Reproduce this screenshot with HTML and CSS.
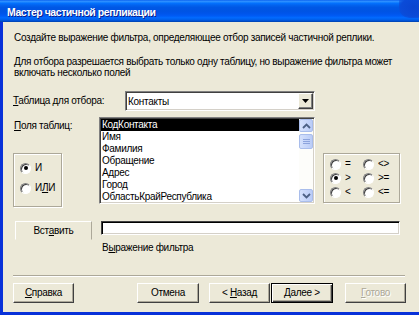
FILE: index.html
```html
<!DOCTYPE html>
<html lang="ru">
<head>
<meta charset="utf-8">
<title>Мастер частичной репликации</title>
<link rel="stylesheet" href="styles.css">
</head>
<body>
<div class="window">
  <div class="titlebar">
    <span class="title">Мастер частичной репликации</span>
    <span class="blob"></span>
  </div>
  <div class="body">
    <p class="intro">Создайте выражение фильтра, определяющее отбор записей частичной реплики.</p>
    <p class="note">Для отбора разрешается выбрать только одну таблицу, но выражение фильтра может включать несколько полей</p>

    <div class="table-row">
      <span class="lbl lbl-table"><u>Т</u>аблица для отбора:</span>
      <div class="combo">
        <span class="combo-text">Контакты</span>
        <span class="drop"><svg width="7" height="4" viewBox="0 0 7 4"><path d="M0 0H7L3.5 4Z" fill="#000"/></svg></span>
      </div>
    </div>

    <div class="fields-row">
      <div class="left-col">
        <span class="lbl lbl-fields"><u>П</u>оля таблиц:</span>
        <div class="group group-logic">
          <div class="radio-item"><span class="radio checked"></span><span>И</span></div>
          <div class="radio-item"><span class="radio"></span><span>И<u>Л</u>И</span></div>
        </div>
      </div>
      <div class="listbox">
        <ul class="items">
          <li class="item selected">КодКонтакта</li>
          <li class="item">Имя</li>
          <li class="item">Фамилия</li>
          <li class="item">Обращение</li>
          <li class="item">Адрес</li>
          <li class="item">Город</li>
          <li class="item">ОбластьКрайРеспублика</li>
        </ul>
        <div class="vscroll">
          <span class="sbtn"><svg width="9" height="6" viewBox="0 0 9 6"><path d="M1 5L4.5 1.5L8 5" fill="none" stroke="#4D6185" stroke-width="1.8"/></svg></span>
          <span class="thumb"><span class="grip"></span><span class="grip"></span><span class="grip"></span></span>
          <span class="track"></span>
          <span class="sbtn"><svg width="9" height="6" viewBox="0 0 9 6"><path d="M1 1L4.5 4.5L8 1" fill="none" stroke="#4D6185" stroke-width="1.8"/></svg></span>
        </div>
      </div>
      <div class="right-col">
        <div class="group group-ops">
          <div class="radio-item"><span class="radio"></span><span>=</span></div>
          <div class="radio-item"><span class="radio"></span><span>&lt;&gt;</span></div>
          <div class="radio-item"><span class="radio checked"></span><span>&gt;</span></div>
          <div class="radio-item"><span class="radio"></span><span>&gt;=</span></div>
          <div class="radio-item"><span class="radio"></span><span>&lt;</span></div>
          <div class="radio-item"><span class="radio"></span><span>&lt;=</span></div>
        </div>
      </div>
    </div>

    <div class="expr-row">
      <button class="btn insert">Вст<u>а</u>вить</button>
      <div class="expr-col">
        <div class="textbox"></div>
        <span class="expr-label">В<u>ы</u>ражение фильтра</span>
      </div>
    </div>

    <div class="sep"></div>

    <div class="buttons">
      <button class="btn b-help"><u>С</u>правка</button>
      <button class="btn b-cancel">Отмена</button>
      <button class="btn b-back">&lt; <u>Н</u>азад</button>
      <button class="btn b-next default"><u>Д</u>алее &gt;</button>
      <button class="btn b-done disabled"><u>Г</u>отово</button>
    </div>
  </div>
</div>
</body>
</html>
```
FILE: styles.css
```css
* { box-sizing: border-box; }
html, body { margin: 0; padding: 0; }
body {
  width: 419px;
  height: 315px;
  overflow: hidden;
  font-family: "Liberation Sans", Arial, sans-serif;
  font-size: 10px;
  letter-spacing: -0.3px;
  color: #000;
  background: #ECE9D8;
}
.window {
  width: 419px;
  height: 315px;
  display: flex;
  flex-direction: column;
  background: #0831D9;
}
.titlebar {
  height: 22px;
  flex: none;
  position: relative;
  display: flex;
  align-items: center;
  padding-left: 7px;
  background: linear-gradient(to bottom, #0058EE 0%, #3593FF 5%, #1A84FF 10%, #036FFC 16%, #0262EE 24%, #0057E5 34%, #0054E3 50%, #0055EB 62%, #005BF5 72%, #026AFE 80%, #0062EF 88%, #0052D6 94%, #0040AB 100%);
}
.title {
  color: #fff;
  font-weight: bold;
  font-size: 10.5px;
  letter-spacing: -0.45px;
  text-shadow: 1px 1px 0 #0A1E8C;
  padding-top: 1px;
}
.blob {
  position: absolute;
  right: -4px;
  top: 0;
  width: 24px;
  height: 18px;
  border-radius: 0 0 0 10px;
  background: radial-gradient(ellipse at 60% 40%, #0A45D0 0%, #0B4BD8 60%, rgba(11,75,216,0) 100%);
}
.body {
  flex: 1;
  margin-left: 3px;
  margin-bottom: 3px;
  background: #ECE9D8;
  padding-left: 10px;
  display: flex;
  flex-direction: column;
}
p { margin: 0; }
.intro {
  margin-top: 10px;
  line-height: 12px;
  padding-left: 1px;
  white-space: nowrap;
}
.note {
  margin-top: 12px;
  line-height: 11px;
  padding-left: 1px;
  width: 395px;
}
.table-row {
  margin-top: 13px;
  display: flex;
  align-items: center;
  height: 20px;
}
.lbl { line-height: 12px; }
.lbl-table { width: 112px; }
.combo {
  width: 190px;
  height: 20px;
  display: flex;
  align-items: center;
  background: #fff;
  border: 1px solid;
  border-color: #808080 #fff #fff #808080;
  box-shadow: inset 1px 1px 0 #404040, inset -1px -1px 0 #D4D0C8;
  padding: 1px;
}
.combo-text { flex: 1; padding-left: 1px; }
.drop {
  width: 15px;
  height: 16px;
  display: flex;
  align-items: center;
  justify-content: center;
  background: #ECE9D8;
  border: 1px solid;
  border-color: #fff #404040 #404040 #fff;
  box-shadow: inset -1px -1px 0 #808080;
}
.fields-row {
  margin-top: 6px;
  display: flex;
  align-items: flex-start;
}
.left-col {
  width: 86px;
  display: flex;
  flex-direction: column;
}
.lbl-fields { margin-top: 3px; padding-left: 1px; }
.group {
  border: 1px solid #ACA899;
  box-shadow: inset 1px 1px 0 #fff, 1px 1px 0 #fff;
}
.group-logic {
  margin-top: 21px;
  width: 49px;
  height: 54px;
  display: flex;
  flex-direction: column;
  padding: 8px 0 0 6px;
  gap: 8px;
}
.radio-item {
  display: flex;
  align-items: center;
  gap: 4px;
  height: 12px;
  line-height: 12px;
}
.radio {
  width: 11px;
  height: 11px;
  border-radius: 50%;
  border: 1px solid;
  border-color: #808080 #fff #fff #808080;
  box-shadow: inset 1px 1px 0 #404040;
  background: #fff;
  display: flex;
  align-items: center;
  justify-content: center;
  flex: none;
}
.radio.checked::after {
  content: "";
  width: 4px;
  height: 4px;
  border-radius: 50%;
  background: #000;
}
.listbox {
  width: 216px;
  height: 87px;
  display: flex;
  background: #fff;
  border: 1px solid;
  border-color: #808080 #fff #fff #808080;
  box-shadow: inset 1px 1px 0 #404040, inset -1px -1px 0 #D4D0C8;
  padding: 1px;
}
.items {
  list-style: none;
  margin: 0;
  padding: 0;
  flex: 1;
  overflow: hidden;
}
.item {
  height: 12px;
  line-height: 12px;
  padding-left: 1px;
  white-space: nowrap;
}
.item.selected { background: #000; color: #fff; }
.vscroll {
  width: 14px;
  display: flex;
  flex-direction: column;
  background: #FDFDFA;
}
.sbtn, .thumb {
  height: 13px;
  border: 1px solid #A9BDEB;
  border-radius: 2px;
  background: linear-gradient(to right, #D5E1FC, #BACCF7);
  display: flex;
  align-items: center;
  justify-content: center;
  flex: none;
}
.thumb {
  margin-top: 2px;
  height: 15px;
  flex-direction: column;
  gap: 1px;
}
.grip { width: 7px; height: 1px; background: #8DA4DD; }
.track { flex: 1; }
.right-col {
  margin-left: 8px;
  width: 77px;
}
.group-ops {
  margin-top: 36px;
  height: 50px;
  display: grid;
  grid-template-columns: 33px 1fr;
  grid-auto-rows: 14px;
  padding: 4px 0 0 6px;
}
.expr-row {
  margin-top: 14px;
  display: flex;
  align-items: flex-start;
}
.btn {
  font: inherit;
  letter-spacing: inherit;
  color: #000;
  background: #ECE9D8;
  border: 1px solid;
  border-color: #fff #404040 #404040 #fff;
  box-shadow: inset -1px -1px 0 #ACA899;
  padding: 0;
  height: 20px;
  line-height: 16px;
  text-align: center;
  flex: none;
}
.insert {
  margin-left: 2px;
  width: 77px;
  height: 19px;
  border-color: #fff #ACA899 #ECE9D8 #fff;
  box-shadow: none;
}
.expr-col {
  margin-left: 9px;
  display: flex;
  flex-direction: column;
}
.textbox {
  width: 299px;
  height: 14px;
  background: #fff;
  border: 1px solid;
  border-color: #404040 #fff #fff #404040;
  box-shadow: inset 1px 1px 0 #000, inset -1px -1px 0 #D4D0C8;
}
.expr-label {
  margin-top: 7px;
  line-height: 11px;
  padding-left: 1px;
}
.sep {
  margin-top: 22px;
  width: 392px;
  height: 2px;
  border-top: 1px solid #ACA899;
  border-bottom: 1px solid #fff;
}
.buttons {
  margin-top: 6px;
  display: flex;
}
.b-help { width: 61px; }
.b-cancel { width: 62px; margin-left: 63px; }
.b-back { width: 61px; margin-left: 10px; }
.b-next { width: 62px; margin-left: 1px; }
.b-done { width: 61px; margin-left: 12px; }
.default {
  border: 1px solid #000;
  box-shadow: inset 1px 1px 0 #fff, inset -1px -1px 0 #404040, inset -2px -2px 0 #ACA899;
}
.disabled {
  color: #ACA899;
  text-shadow: 1px 1px 0 #fff;
}
```
